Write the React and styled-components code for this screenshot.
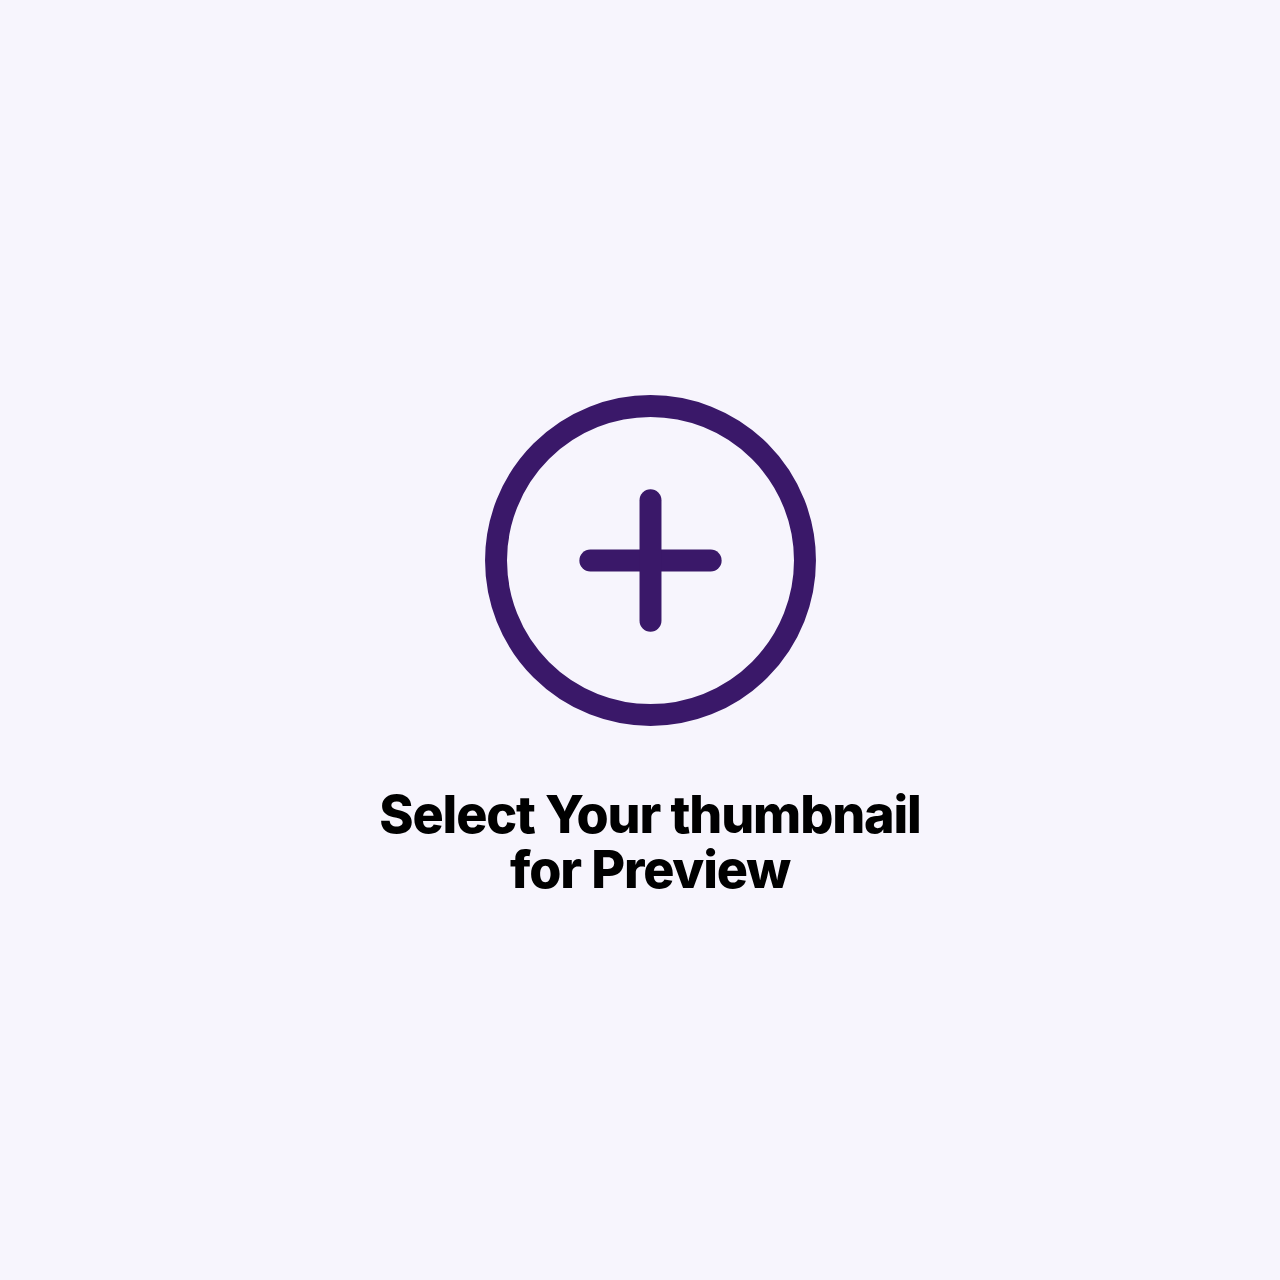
import React from "react";
import styled, { createGlobalStyle } from "styled-components";

const Global = createGlobalStyle`
  html, body { margin: 0; padding: 0; background: #f7f5fd; }
  * { box-sizing: border-box; }
`;

const Page = styled.main`
  width: 1280px;
  height: 1280px;
  padding: 380px 0 0 20px;
  display: flex;
  flex-direction: column;
  align-items: center;
  background: #f7f5fd;
`;

const IconWrap = styled.div`
  width: 361px;
  height: 361px;
  color: #3a1869;
  display: flex;
`;

const Title = styled.h1`
  margin: 46px 0 0;
  font-family: Inter, "Liberation Sans", sans-serif;
  font-weight: 800;
  font-size: 52px;
  line-height: 55px;
  letter-spacing: -1.15px;
  color: #000;
  text-align: center;
`;

const Line = styled.span`
  display: block;
`;

function AddIcon() {
  return (
    <svg width="361" height="361" viewBox="0 0 24 24" fill="none" stroke="currentColor" strokeWidth="1.46" strokeLinecap="round" strokeLinejoin="round">
      <circle cx="12" cy="12" r="10.27" />
      <path d="M8 12h8" />
      <path d="M12 8v8" />
    </svg>
  );
}

export default function App() {
  return (
    <>
      <Global />
      <Page>
        <IconWrap>
          <AddIcon />
        </IconWrap>
        <Title>
          <Line>Select Your thumbnail</Line>
          <Line>for Preview</Line>
        </Title>
      </Page>
    </>
  );
}
